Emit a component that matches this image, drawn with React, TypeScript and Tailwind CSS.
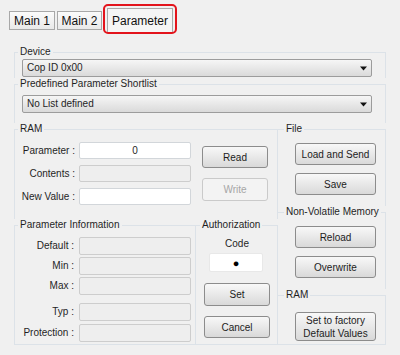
import React from 'react';

const Tab = ({ children, className = '' }: { children: React.ReactNode; className?: string }) => (
  <div
    className={`flex h-[19px] items-center justify-center border border-[#a8a8a8] bg-linear-to-b from-[#fbfbfb] to-[#e9e9e9] text-[12px] leading-[14px] text-[#111] ${className}`}
  >
    {children}
  </div>
);

const Btn = ({
  children,
  disabled,
  className = '',
}: {
  children: React.ReactNode;
  disabled?: boolean;
  className?: string;
}) => (
  <button
    disabled={disabled}
    className={`flex items-center justify-center rounded-[3px] border text-center text-[10px] leading-[13px] ${
      disabled
        ? 'border-[#cacaca] bg-[#f3f3f3] text-[#a6a6a6]'
        : 'border-[#8c8c8c] bg-linear-to-b from-[#f8f8f8] to-[#d9d9d9] text-[#1c1c1c]'
    } ${className}`}
  >
    {children}
  </button>
);

const Select = ({ value, className = '' }: { value: string; className?: string }) => (
  <div
    className={`flex h-[18px] w-[350px] items-center justify-between rounded-[2px] border border-[#9c9c9c] bg-linear-to-b from-[#f6f6f6] to-[#dadada] pl-[4px] pr-[4px] text-[10px] ${className}`}
  >
    <span>{value}</span>
    <svg width="7" height="5" viewBox="0 0 7 5">
      <path d="M0 0.5 H7 L3.5 4.5 Z" fill="#111" />
    </svg>
  </div>
);

const Field = ({ value, disabled, className = '' }: { value?: string; disabled?: boolean; className?: string }) => (
  <div
    className={`flex items-center justify-center rounded-[2px] border ${
      disabled ? 'border-[#cdcdcd] bg-[#eeeeee]' : 'border-[#d2d6da] bg-white'
    } ${className}`}
  >
    {value}
  </div>
);

const Legend = ({ children }: { children: React.ReactNode }) => (
  <legend className="px-[2px] text-[10px] leading-[12px] text-[#1f1f1f]">{children}</legend>
);

const ramRows = [
  { label: 'Parameter :', value: '0', disabled: false },
  { label: 'Contents :', value: '', disabled: true },
  { label: 'New Value :', value: '', disabled: false },
];

const infoRows = [
  { label: 'Default :', mt: 'mt-[6px]' },
  { label: 'Min :', mt: 'mt-[2px]' },
  { label: 'Max :', mt: 'mt-[2px]' },
  { label: 'Typ :', mt: 'mt-[8px]' },
  { label: 'Protection :', mt: 'mt-[3px]' },
];

export default function App() {
  return (
    <div className="h-[355px] w-[400px] overflow-hidden bg-[#f0f0f0] font-['Liberation_Sans',Arial,sans-serif] text-[10px] leading-[12px] text-[#1f1f1f]">
      {/* tabs */}
      <div className="flex h-[34px] items-start pl-[9px] pt-[4px]">
        <Tab className="mt-[7px] w-[46px]">Main 1</Tab>
        <Tab className="ml-[2px] mt-[7px] w-[45px]">Main 2</Tab>
        <div className="ml-[1px] h-[30px] w-[74px] rounded-[5px] border-2 border-[#e3141c] px-[2px] pt-[2px]">
          <div className="flex h-[24px] items-center justify-center border border-b-0 border-[#a9a9a9] bg-[#f5f5f5] text-[12px] leading-[14px] text-[#111]">
            Parameter
          </div>
        </div>
      </div>

      <div className="mx-[14px] mt-[12px]">
        <fieldset className="border-x border-t border-[#dce2e8] pb-[1px] pl-[3px]">
          <Legend>Device</Legend>
          <Select value="Cop ID 0x00" className="ml-[4px] mt-[1px]" />
        </fieldset>

        <fieldset className="border-x border-t border-[#dce2e8] pb-[10px] pl-[3px]">
          <Legend>Predefined Parameter Shortlist</Legend>
          <Select value="No List defined" className="ml-[4px] mt-[5px]" />
        </fieldset>

        <div className="flex">
          {/* left column */}
          <div className="flex w-[264px] flex-col">
            <fieldset className="border-x border-t border-[#dce2e8] pl-[3px]">
              <Legend>RAM</Legend>
              <div className="flex h-[84px]">
                <div className="flex flex-col gap-[6px] pt-[7px]">
                  {ramRows.map((r) => (
                    <div key={r.label} className="flex items-center">
                      <span className="w-[57px] text-right">{r.label}</span>
                      <Field value={r.value} disabled={r.disabled} className="ml-[4px] h-[17px] w-[112px]" />
                    </div>
                  ))}
                </div>
                <div className="ml-[11px] flex flex-col pt-[11px]">
                  <Btn className="h-[22px] w-[66px]">Read</Btn>
                  <Btn disabled className="mt-[10px] h-[23px] w-[66px]">
                    Write
                  </Btn>
                </div>
              </div>
            </fieldset>

            <div className="flex">
              <fieldset className="w-[182px] border border-[#dce2e8] pb-[2px] pl-[3px]">
                <Legend>Parameter Information</Legend>
                {infoRows.map((r) => (
                  <div key={r.label} className={`flex items-center ${r.mt}`}>
                    <span className="w-[56px] text-right">{r.label}</span>
                    <Field disabled className="ml-[5px] h-[18px] w-[112px]" />
                  </div>
                ))}
              </fieldset>
              <fieldset className="w-[82px] border-y border-r border-[#dce2e8] pl-[4px]">
                <Legend>Authorization</Legend>
                <div className="mt-[7px] pr-[3px] text-center">Code</div>
                <Field value="●" className="ml-[9px] mt-[3px] h-[19px] w-[54px] border-[#e8e8e8] text-[11px] text-black" />
                <Btn className="ml-[4px] mt-[11px] h-[23px] w-[66px]">Set</Btn>
                <Btn className="ml-[4px] mt-[10px] h-[22px] w-[66px]">Cancel</Btn>
              </fieldset>
            </div>
          </div>

          {/* right column */}
          <div className="flex w-[108px] flex-col">
            <fieldset className="border-r border-t border-[#dce2e8] pb-[11px] pl-[6px]">
              <Legend>File</Legend>
              <Btn className="ml-[11px] mt-[8px] h-[22px] w-[81px]">Load and Send</Btn>
              <Btn className="ml-[11px] mt-[8px] h-[22px] w-[81px]">Save</Btn>
            </fieldset>
            <fieldset className="border-r border-t border-[#dce2e8] pb-[11px] pl-[6px]">
              <Legend>Non-Volatile Memory</Legend>
              <Btn className="ml-[11px] mt-[8px] h-[22px] w-[81px]">Reload</Btn>
              <Btn className="ml-[11px] mt-[8px] h-[22px] w-[81px]">Overwrite</Btn>
            </fieldset>
            <fieldset className="flex-1 border-y border-r border-[#dce2e8] pb-[3px] pl-[6px]">
              <Legend>RAM</Legend>
              <Btn className="ml-[11px] mt-[11px] h-[29px] w-[81px]">
                Set to factory
                <br />
                Default Values
              </Btn>
            </fieldset>
          </div>
        </div>
      </div>
    </div>
  );
}
